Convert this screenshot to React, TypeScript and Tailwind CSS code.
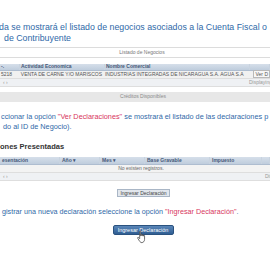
import React from "react";

const neg = [
  { w: "w-[20px]", label: "-." },
  { w: "w-[85px]", label: "Actividad Economica" },
  { w: "w-[145px]", label: "Nombre Comercial" },
  { w: "flex-1", label: "" },
];

const decl = [
  { w: "w-[60px]", label: "esentación" },
  { w: "w-[40px]", label: "Año ▾" },
  { w: "w-[45px]", label: "Mes ▾" },
  { w: "w-[65px]", label: "Base Gravable" },
  { w: "w-[52px]", label: "Impuesto" },
  { w: "flex-1", label: "" },
];

function HandCursor() {
  return (
    <svg width="12" height="14" viewBox="0 0 10 12" className="absolute left-[136px] top-[230px] z-10">
      <path
        d="M3 1.2c0-.6.9-.6.9 0V5h.2V4c0-.6.9-.6.9 0v1h.2v-.6c0-.6.9-.6.9 0V5.2h.2v-.3c0-.6.9-.6.9 0V8c0 1.6-1 2.8-2.4 2.8H4.9C4 10.8 3.3 10.2 2.8 9.4L1.3 7c-.3-.5.3-1 .7-.6L3 7.4z"
        fill="#fff"
        stroke="#333"
        strokeWidth="0.6"
      />
    </svg>
  );
}

export default function App() {
  return (
    <div className="relative w-[270px] h-[270px] overflow-hidden bg-white font-['Liberation_Sans',Arial,sans-serif] pt-[22px]">
      {/* Intro */}
      <div className="text-[8.8px] leading-[11px] text-[#2f69a8] whitespace-nowrap">
        <div className="-ml-[1px]">da se mostrará el listado de negocios asociados a la Cuenta Fiscal o</div>
        <div className="ml-[4px]">de Contribuyente</div>
      </div>

      {/* Listado de Negocios */}
      <div className="mt-[3px] h-[11px] border-y border-[#dcdcdc] flex items-center justify-center pl-[14px] text-[5px] text-[#777]">
        Listado de Negocios
      </div>

      <div className="mt-[6px] whitespace-nowrap text-[5px]">
        <div className="flex h-[7px] items-center bg-gradient-to-b from-[#d6dfea] to-[#bfcddd] border-b border-[#aebdd0] font-bold text-[#465878]">
          {neg.map((c, i) => (
            <div key={i} className={`${c.w} h-full flex items-center pl-[1px] border-r border-[#c8d3e0] overflow-hidden`}>
              {c.label}
            </div>
          ))}
        </div>
        <div className="flex h-[8px] items-center bg-[#f1f1f1] border-b border-[#dedede] text-[#555]">
          <div className="w-[20px] pl-[1px]">5218</div>
          <div className="w-[85px] pl-[1px]">VENTA DE CARNE Y/O MARISCOS</div>
          <div className="w-[145px] pl-[1px]">INDUSTRIAS INTEGRADAS DE NICARAGUA S.A. AGUA S.A</div>
          <div className="flex-1 pl-[6px]">
            <span className="border border-[#b9b9b9] bg-[#f7f7f7] px-[1px]">Ver D</span>
          </div>
        </div>
        <div className="flex h-[8px] items-center justify-between bg-[#eff1f4] border-b border-[#dedede] text-[#999]">
          <span className="pl-[3px]">‹ ›</span>
          <span className="-mr-[2px]">Displaying</span>
        </div>
      </div>

      {/* Creditos */}
      <div className="mt-[5px] h-[10px] bg-[#e7e7e7] flex items-center justify-center pl-[16px] text-[5px] text-[#8a8a8a]">
        Créditos Disponibles
      </div>

      {/* Parrafo 2 */}
      <div className="mt-[10px] text-[7.3px] leading-[10px] text-[#2f69a8] whitespace-nowrap">
        <div className="ml-[1px]">
          ccionar la opción <span className="text-[#d8365e]">"Ver Declaraciones"</span> se mostrará el listado de las declaraciones p
        </div>
        <div className="ml-[3px]">do al ID de Negocio).</div>
      </div>

      <div className="mt-[9px] text-[7.5px] font-bold text-[#333] whitespace-nowrap">ones Presentadas</div>

      <div className="mt-[5px] whitespace-nowrap text-[5px]">
        <div className="flex h-[8px] items-center bg-gradient-to-b from-[#d6dfea] to-[#bfcddd] border-b border-[#aebdd0] font-bold text-[#465878]">
          {decl.map((c, i) => (
            <div key={i} className={`${c.w} h-full flex items-center pl-[2px] border-r border-[#c8d3e0] overflow-hidden`}>
              {c.label}
            </div>
          ))}
        </div>
        <div className="flex h-[8px] items-center justify-center pl-[12px] bg-[#f3f3f3] border-b border-[#dedede] text-[#666]">
          No existen registros.
        </div>
        <div className="flex h-[8px] items-center justify-between bg-[#eff1f4] border-b border-[#dedede] text-[#999]">
          <span className="pl-[3px]">‹ ›</span>
          <span className="-mr-[6px]">Displ</span>
        </div>
      </div>

      <div className="mt-[8px] flex justify-center pl-[17px]">
        <span className="h-[8px] px-[2px] flex items-center border border-[#a9b6c6] bg-[#e2e7ed] text-[5px] text-[#444]">
          Ingresar Declaración
        </span>
      </div>

      <div className="mt-[10px] ml-[2px] text-[7.2px] leading-[10px] text-[#2f69a8] whitespace-nowrap">
        gistrar una nueva declaración seleccione la opción <span className="text-[#d8365e]">"Ingresar Declaración"</span>.
      </div>

      <div className="mt-[8px] flex justify-center pl-[16px]">
        <button className="h-[10px] w-[61px] rounded-[2px] bg-gradient-to-b from-[#5a86b8] to-[#2f5e93] border border-[#2a527f] text-white text-[5.5px] flex items-center justify-center">
          Ingresar Declaración
        </button>
      </div>

      <HandCursor />
    </div>
  );
}
